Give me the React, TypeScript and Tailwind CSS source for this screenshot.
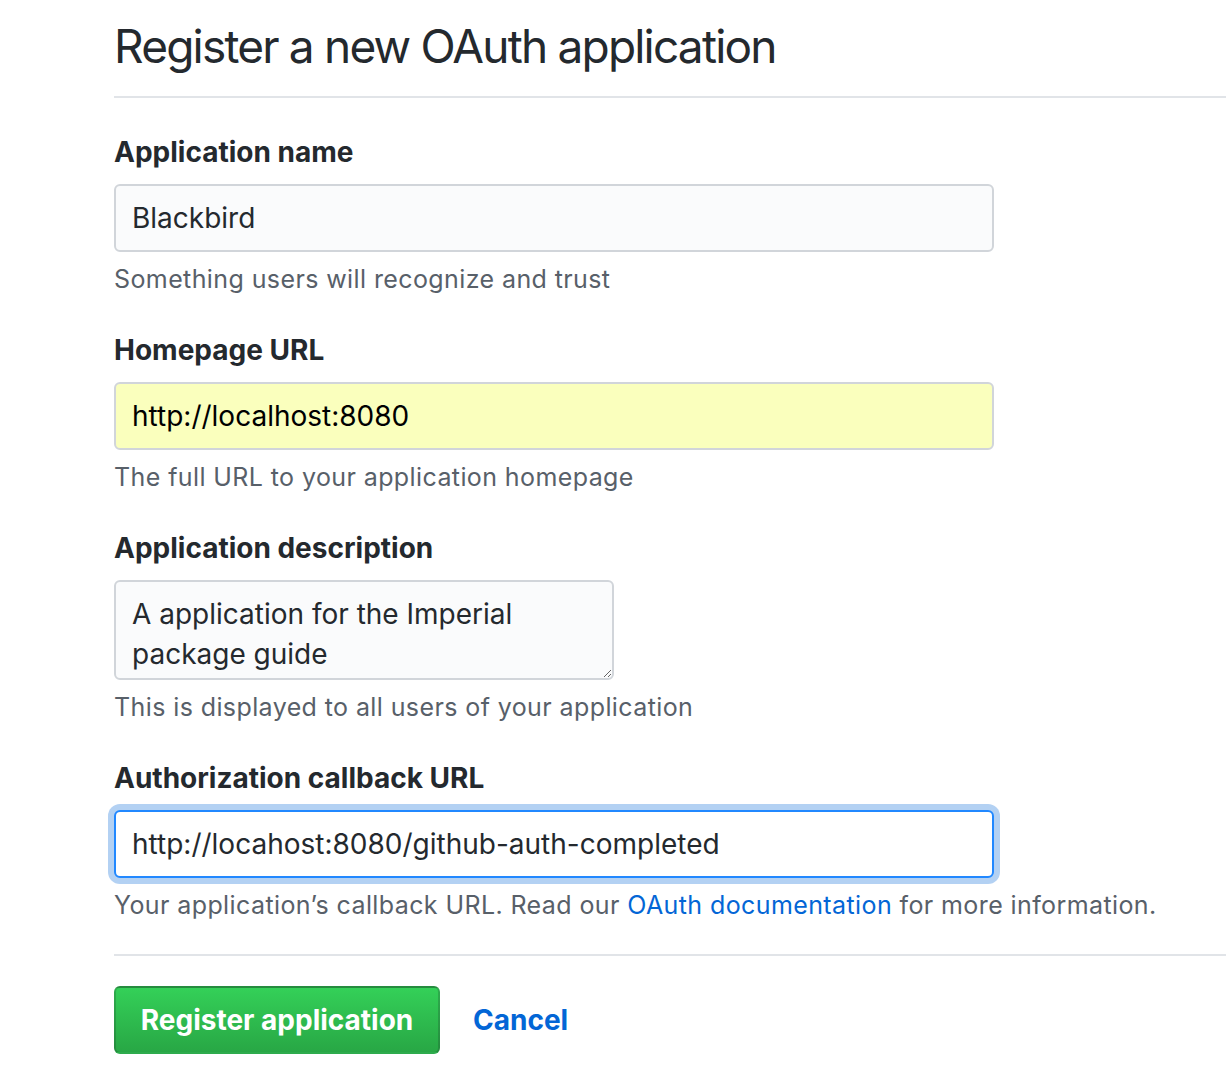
import React from 'react';

const font = { fontFamily: 'Inter, "Liberation Sans", sans-serif' };

interface FieldProps {
  label: string;
  note: React.ReactNode;
  children: React.ReactNode;
  first?: boolean;
}

const Field: React.FC<FieldProps> = ({ label, note, children, first }) => (
  <div className={first ? 'mt-[34px]' : 'mt-[33px]'}>
    <div className="text-[28px] leading-[40px] font-bold text-[#24292e] mb-[12px]">{label}</div>
    {children}
    <p className="mt-[9px] text-[25px] leading-[36px] tracking-[0.4px] text-[#586069]">{note}</p>
  </div>
);

const inputBase =
  'block w-[880px] h-[68px] px-[16px] rounded-[6px] border-2 text-[28px] outline-none';

export default function App() {
  return (
    <div className="min-h-[1088px] bg-white pl-[114px]" style={font}>
      <div className="pt-[16px] pb-[20px] border-b-2 border-[#e1e4e8]">
        <h1 className="text-[46px] leading-[60px] font-normal text-[#24292e] tracking-[-1.8px]">
          Register a new OAuth application
        </h1>
      </div>

      <Field first label="Application name" note="Something users will recognize and trust">
        <input
          readOnly
          defaultValue="Blackbird"
          className={`${inputBase} bg-[#fafbfc] border-[#d1d5da] text-[#24292e]`}
        />
      </Field>

      <Field label="Homepage URL" note="The full URL to your application homepage">
        <input
          readOnly
          defaultValue="http://localhost:8080"
          className={`${inputBase} bg-[#faffbd] border-[#d1d5da] text-black`}
        />
      </Field>

      <Field label="Application description" note="This is displayed to all users of your application">
        <textarea
          readOnly
          defaultValue="A application for the Imperial package guide"
          className="block w-[500px] h-[100px] px-[16px] pt-[12px] pb-0 rounded-[6px] border-2 border-[#d1d5da] bg-[#fafbfc] text-[28px] leading-[40px] text-[#24292e] outline-none resize"
        />
      </Field>

      <Field
        label="Authorization callback URL"
        note={
          <>
            Your application’s callback URL. Read our{' '}
            <a className="text-[#0366d6]">OAuth documentation</a> for more information.
          </>
        }
      >
        <input
          readOnly
          defaultValue="http://locahost:8080/github-auth-completed"
          className={`${inputBase} bg-white border-[#2188ff] text-[#24292e] shadow-[0_0_0_6px_rgba(3,102,214,0.3)]`}
        />
      </Field>

      <div className="mt-[31px] border-t-2 border-[#e1e4e8] pt-[30px] flex items-center">
        <button className="w-[326px] h-[68px] rounded-[6px] border-2 border-[rgba(27,31,35,0.2)] bg-gradient-to-b from-[#34d058] to-[#28a745] text-white text-[28px] font-bold">
          Register application
        </button>
        <a className="ml-[33px] text-[28px] font-bold text-[#0366d6]">Cancel</a>
      </div>
    </div>
  );
}
